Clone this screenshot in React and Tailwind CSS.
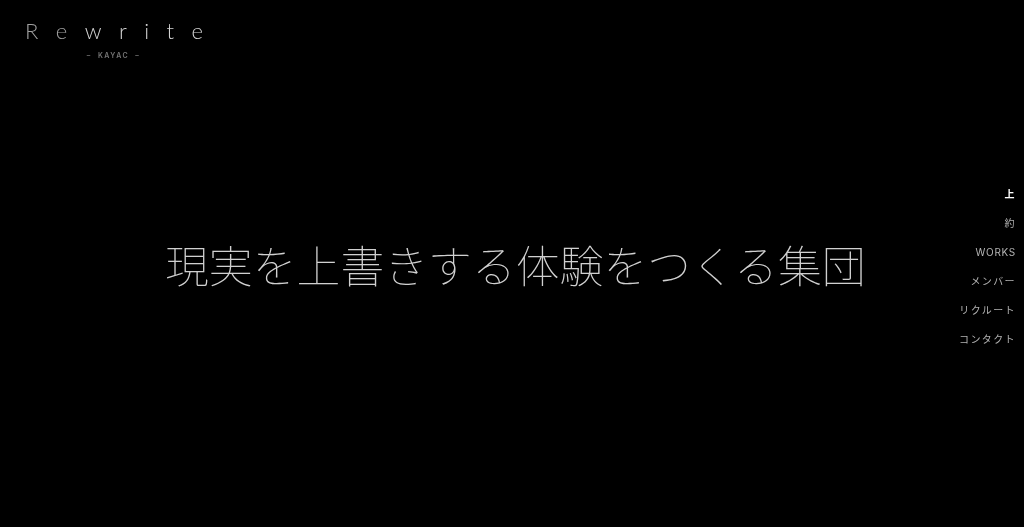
const NAV = [
  { label: "上", cls: "font-bold text-white tracking-[0.14em]" },
  { label: "約", cls: "text-[#b4b4b4] tracking-[0.14em]" },
  { label: "WORKS", cls: "text-[#b4b4b4] tracking-[0.07em]" },
  { label: "メンバー", cls: "text-[#b4b4b4] tracking-[0.14em]" },
  { label: "リクルート", cls: "text-[#b4b4b4] tracking-[0.14em]" },
  { label: "コンタクト", cls: "text-[#b4b4b4] tracking-[0.14em]" },
];

const FONT = "font-['Inter','Noto_Sans_CJK_JP',sans-serif]";

export default function App() {
  return (
    <div className={`relative h-[527px] w-full overflow-hidden bg-black ${FONT}`}>
      <header className="absolute left-[25px] top-[20px] w-[178px] will-change-transform">
        <h1 className="flex justify-between font-['Lato',sans-serif] text-[22px] leading-[21px] font-light text-[#d4d4d4]">
          <span className="text-[#a0a0a0]">R</span>
          <span className="text-[#a0a0a0]">e</span>
          <span>w</span>
          <span>r</span>
          <span>i</span>
          <span>t</span>
          <span>e</span>
        </h1>
        <p className="mt-[10px] pr-[1px] text-center text-[7px] leading-[10px] font-semibold tracking-[0.2em] text-[#777]">
          – &nbsp;KAYAC&nbsp; –
        </p>
      </header>

      <main className="flex h-full items-center justify-center pl-[6px] pt-[9px]">
        <h2 className="text-[43.85px] leading-[60px] font-thin whitespace-nowrap text-[#d0d0d0] will-change-transform">
          現実を上書きする体験をつくる集団
        </h2>
      </main>

      <nav className="absolute right-[8px] top-[184px] flex flex-col items-end gap-[9px] will-change-transform">
        {NAV.map((item) => (
          <a key={item.label} href="#" className={`text-[10px] leading-[20px] ${item.cls}`}>
            {item.label}
          </a>
        ))}
      </nav>
    </div>
  );
}
